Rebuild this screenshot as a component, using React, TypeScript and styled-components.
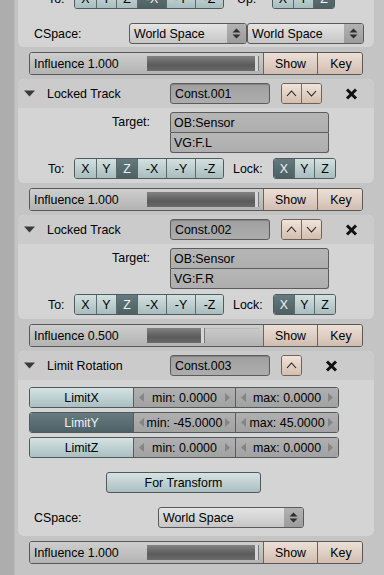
import React from 'react';
import styled, { createGlobalStyle } from 'styled-components';

const FONT = `"Liberation Sans", Arial, sans-serif`;

const Global = createGlobalStyle`
  html, body { margin: 0; padding: 0; background: #c4c4c4; }
  body { font-family: ${FONT}; font-size: 12.4px; color: #000; }
`;

const Viewport = styled.div`
  width: 384px;
  height: 575px;
  overflow: hidden;
  display: flex;
  background: #c4c4c4;
`;

const Gutter = styled.div`
  flex: 0 0 15px;
  background: #adadad;
  box-shadow: inset -1px 0 0 #b8b8b8;
`;

const Stack = styled.div`
  flex: 1;
  display: flex;
  flex-direction: column;
  margin-top: -16px;
  padding-left: 3px;
`;

const Panel = styled.section`
  width: 356px;
  flex: 0 0 auto;
  background: #d4d4d4;
  border-radius: 6px;
  overflow: hidden;
  box-shadow: inset 0 1px 0 #dedede;
`;

const PanelHeader = styled.header`
  height: 29px;
  display: flex;
  align-items: center;
  padding-left: 6px;
  background: #cbcbcb;
`;

const Collapse = styled.svg`
  flex: 0 0 11px;
  margin-right: 12px;
`;

const Title = styled.span`
  flex: 0 0 123px;
  white-space: nowrap;
`;

const NameField = styled.div`
  flex: 0 0 100px;
  box-sizing: border-box;
  height: 21px;
  border: 1px solid #5c5c5c;
  border-radius: 3px;
  background: linear-gradient(#a0a0a0, #adadad);
  box-shadow: inset 0 1px 1px rgba(0, 0, 0, 0.18);
  padding-left: 4px;
  display: flex;
  align-items: center;
  white-space: nowrap;
`;

const MoveGroup = styled.div`
  display: flex;
  margin-left: 11px;
  box-sizing: border-box;
  height: 21px;
  border: 1px solid #6e625a;
  border-radius: 3px;
  overflow: hidden;
`;

const MoveBtn = styled.div`
  width: 19px;
  display: flex;
  align-items: center;
  justify-content: center;
  background: linear-gradient(#f0e3d9, #d3beaf);
  & + & {
    border-left: 1px solid #7a6c62;
  }
`;

const CloseIcon = styled.svg`
  margin-left: 23px;
`;

const PanelBody = styled.div<{ $pt: number; $pb: number; $gap: number }>`
  display: flex;
  flex-direction: column;
  padding: ${(p) => p.$pt}px 0 ${(p) => p.$pb}px;
  gap: ${(p) => p.$gap}px;
`;

const TargetRow = styled.div`
  display: grid;
  grid-template-columns: 132px 159px;
  column-gap: 20px;
`;

const FieldLabel = styled.span`
  text-align: right;
  line-height: 21px;
`;

const TargetFields = styled.div`
  display: flex;
  flex-direction: column;
`;

const TargetField = styled.div<{ $first?: boolean }>`
  box-sizing: border-box;
  height: ${(p) => (p.$first ? 21 : 20)}px;
  border: 1px solid #5c5c5c;
  border-top-width: ${(p) => (p.$first ? 1 : 0)}px;
  border-radius: ${(p) => (p.$first ? '3px 3px 0 0' : '0 0 3px 3px')};
  background: linear-gradient(#b6b6b6, #aeaeae);
  padding-left: 3px;
  display: flex;
  align-items: center;
`;

const AxisRow = styled.div`
  display: flex;
  align-items: center;
  height: 21px;
  padding-left: 30px;
`;

const AxisLabel = styled.span<{ $w: number; $ml?: number }>`
  flex: 0 0 ${(p) => p.$w}px;
  margin-left: ${(p) => p.$ml ?? 0}px;
`;

const ToggleGroup = styled.div`
  display: flex;
  box-sizing: border-box;
  height: 21px;
  border: 1px solid #4f5c5c;
  border-radius: 3px;
  overflow: hidden;
`;

const Toggle = styled.div<{ $w: number; $on?: boolean }>`
  width: ${(p) => p.$w}px;
  display: flex;
  align-items: center;
  justify-content: center;
  white-space: nowrap;
  color: ${(p) => (p.$on ? '#eef2f2' : '#000')};
  background: ${(p) =>
    p.$on ? 'linear-gradient(#657a7e, #4d6064)' : 'linear-gradient(#d3e0e0, #a9bdbe)'};
  & + & {
    border-left: 1px solid #5c6a6a;
  }
`;

const CSpaceRow = styled.div`
  display: flex;
  align-items: center;
  height: 21px;
  padding-left: 16px;
`;

const Dropdown = styled.div<{ $w: number }>`
  flex: 0 0 ${(p) => p.$w}px;
  box-sizing: border-box;
  height: 21px;
  display: flex;
  border: 1px solid #5a5a5a;
  border-radius: 3px;
  overflow: hidden;
  background: linear-gradient(#e4e4e4, #c6c6c6);
`;

const DropText = styled.span`
  flex: 1;
  padding-left: 4px;
  display: flex;
  align-items: center;
  white-space: nowrap;
`;

const DropArrows = styled.span`
  flex: 0 0 19px;
  display: flex;
  align-items: center;
  justify-content: center;
  background: linear-gradient(#b2b2b2, #9c9c9c);
`;

const LimitList = styled.div`
  display: flex;
  flex-direction: column;
  gap: 4px;
`;

const LimitRow = styled.div`
  display: flex;
  margin-left: 11px;
  width: 310px;
  box-sizing: border-box;
  height: 21px;
  border: 1px solid #505a5a;
  border-radius: 3px;
  overflow: hidden;
`;

const LimitToggle = styled.div<{ $on?: boolean }>`
  flex: 0 0 103px;
  display: flex;
  align-items: center;
  justify-content: center;
  color: ${(p) => (p.$on ? '#eef2f2' : '#000')};
  background: ${(p) =>
    p.$on ? 'linear-gradient(#667b80, #4e6166)' : 'linear-gradient(#d5e2e3, #aabfc1)'};
`;

const NumField = styled.div<{ $w: number }>`
  flex: 0 0 ${(p) => p.$w}px;
  box-sizing: border-box;
  display: flex;
  align-items: center;
  justify-content: space-between;
  padding: 0 5px;
  border-left: 1px solid #5c5c5c;
  background: linear-gradient(#b0b0b0, #a2a2a2);
  white-space: nowrap;
`;

const ActionButton = styled.div`
  margin-left: 88px;
  width: 155px;
  box-sizing: border-box;
  height: 21px;
  display: flex;
  align-items: center;
  justify-content: center;
  border: 1px solid #505a5a;
  border-radius: 3px;
  background: linear-gradient(#d5e2e3, #aabfc1);
`;

const InfluenceRow = styled.div`
  display: flex;
  flex: 0 0 23px;
  width: 334px;
  box-sizing: border-box;
  margin: 5px 0 4px 11px;
  border: 1px solid #585858;
  border-radius: 3px;
  overflow: hidden;
`;

const Slider = styled.div`
  flex: 0 0 233px;
  display: flex;
  align-items: center;
  padding-left: 4px;
  box-sizing: border-box;
  background: linear-gradient(#cecece, #b3b3b3);
`;

const SliderLabel = styled.span`
  flex: 0 0 113px;
  white-space: nowrap;
`;

const Track = styled.div`
  flex: 0 0 112px;
  height: 15px;
  display: flex;
  box-shadow: inset 0 1px 0 rgba(0, 0, 0, 0.08);
`;

const Fill = styled.div`
  height: 100%;
  box-sizing: border-box;
  background: linear-gradient(#828282, #5b5b5b 60%, #6a6a6a);
  border-right: 3px solid #d6d6d6;
  box-shadow: 1px 0 0 #777;
`;

const PeachButton = styled.div<{ $w: number }>`
  flex: 0 0 ${(p) => p.$w}px;
  display: flex;
  align-items: center;
  justify-content: center;
  border-left: 1px solid #6e625a;
  background: linear-gradient(#ece0d7, #d1bdb0);
`;

/* ---------- icons ---------- */

const Triangle = () => (
  <Collapse width="11" height="7" viewBox="0 0 11 7">
    <polygon points="0,0.5 11,0.5 5.5,6.5" fill="#3a3a3a" />
  </Collapse>
);

const Chevron = ({ down }: { down?: boolean }) => (
  <svg width="11" height="7" viewBox="0 0 11 7">
    <polyline
      points={down ? '1,1 5.5,6 10,1' : '1,6 5.5,1 10,6'}
      fill="none"
      stroke="#1b1b1b"
      strokeWidth="1.1"
    />
  </svg>
);

const Close = () => (
  <CloseIcon width="13" height="12" viewBox="0 0 13 12">
    <path d="M2 1.5 L11 10.5 M11 1.5 L2 10.5" stroke="#111" strokeWidth="3" />
  </CloseIcon>
);

const UpDown = () => (
  <svg width="9" height="11" viewBox="0 0 9 11">
    <polygon points="0.5,4.5 4.5,0.5 8.5,4.5" fill="#2e2e2e" />
    <polygon points="0.5,6.5 4.5,10.5 8.5,6.5" fill="#2e2e2e" />
  </svg>
);

const Arrow = ({ right }: { right?: boolean }) => (
  <svg width="5" height="9" viewBox="0 0 5 9">
    <polygon points={right ? '0,0 5,4.5 0,9' : '5,0 0,4.5 5,9'} fill="#858585" />
  </svg>
);

/* ---------- parts ---------- */

const AXES = [
  { t: 'X', w: 21 },
  { t: 'Y', w: 19 },
  { t: 'Z', w: 20 },
  { t: '-X', w: 28 },
  { t: '-Y', w: 28 },
  { t: '-Z', w: 27 },
];
const LOCKS = [
  { t: 'X', w: 20 },
  { t: 'Y', w: 19 },
  { t: 'Z', w: 20 },
];

const AxisToggles = ({ items, on }: { items: { t: string; w: number }[]; on: string }) => (
  <ToggleGroup>
    {items.map((a) => (
      <Toggle key={a.t} $w={a.w} $on={a.t === on}>
        {a.t}
      </Toggle>
    ))}
  </ToggleGroup>
);

const Influence = ({ value }: { value: number }) => (
  <InfluenceRow>
    <Slider>
      <SliderLabel>Influence {value.toFixed(3)}</SliderLabel>
      <Track>
        <Fill style={{ width: 3 + value * 108 }} />
      </Track>
    </Slider>
    <PeachButton $w={53}>Show</PeachButton>
    <PeachButton $w={46}>Key</PeachButton>
  </InfluenceRow>
);

const Header = ({ title, name, down = true }: { title: string; name: string; down?: boolean }) => (
  <PanelHeader>
    <Triangle />
    <Title>{title}</Title>
    <NameField>{name}</NameField>
    <MoveGroup>
      <MoveBtn>
        <Chevron />
      </MoveBtn>
      {down && (
        <MoveBtn>
          <Chevron down />
        </MoveBtn>
      )}
    </MoveGroup>
    <Close />
  </PanelHeader>
);

const LockedTrack = ({ name, vg }: { name: string; vg: string }) => (
  <Panel>
    <Header title="Locked Track" name={name} />
    <PanelBody $pt={4} $pb={4} $gap={5}>
      <TargetRow>
        <FieldLabel>Target:</FieldLabel>
        <TargetFields>
          <TargetField $first>OB:Sensor</TargetField>
          <TargetField>{vg}</TargetField>
        </TargetFields>
      </TargetRow>
      <AxisRow>
        <AxisLabel $w={26}>To:</AxisLabel>
        <AxisToggles items={AXES} on="Z" />
        <AxisLabel $w={40} $ml={9}>
          Lock:
        </AxisLabel>
        <AxisToggles items={LOCKS} on="X" />
      </AxisRow>
    </PanelBody>
  </Panel>
);

const LIMITS = [
  { n: 'LimitX', on: false, min: '0.0000', max: '0.0000' },
  { n: 'LimitY', on: true, min: '-45.0000', max: '45.0000' },
  { n: 'LimitZ', on: false, min: '0.0000', max: '0.0000' },
];

export default function App() {
  return (
    <Viewport>
      <Global />
      <Gutter />
      <Stack>
        <Panel>
          <PanelBody $pt={4} $pb={3} $gap={14}>
            <AxisRow>
              <AxisLabel $w={26}>To:</AxisLabel>
              <AxisToggles items={AXES} on="-X" />
              <AxisLabel $w={35} $ml={13}>
                Up:
              </AxisLabel>
              <AxisToggles items={LOCKS} on="Z" />
            </AxisRow>
            <CSpaceRow>
              <AxisLabel $w={95}>CSpace:</AxisLabel>
              <Dropdown $w={118}>
                <DropText>World Space</DropText>
                <DropArrows>
                  <UpDown />
                </DropArrows>
              </Dropdown>
              <Dropdown $w={117}>
                <DropText>World Space</DropText>
                <DropArrows>
                  <UpDown />
                </DropArrows>
              </Dropdown>
            </CSpaceRow>
          </PanelBody>
        </Panel>
        <Influence value={1} />
        <LockedTrack name="Const.001" vg="VG:F.L" />
        <Influence value={1} />
        <LockedTrack name="Const.002" vg="VG:F.R" />
        <Influence value={0.5} />
        <Panel>
          <Header title="Limit Rotation" name="Const.003" down={false} />
          <PanelBody $pt={7} $pb={8} $gap={14}>
            <LimitList>
              {LIMITS.map((l) => (
                <LimitRow key={l.n}>
                  <LimitToggle $on={l.on}>{l.n}</LimitToggle>
                  <NumField $w={102}>
                    <Arrow />
                    <span>min: {l.min}</span>
                    <Arrow right />
                  </NumField>
                  <NumField $w={103}>
                    <Arrow />
                    <span>max: {l.max}</span>
                    <Arrow right />
                  </NumField>
                </LimitRow>
              ))}
            </LimitList>
            <ActionButton>For Transform</ActionButton>
            <CSpaceRow>
              <AxisLabel $w={124}>CSpace:</AxisLabel>
              <Dropdown $w={146}>
                <DropText>World Space</DropText>
                <DropArrows>
                  <UpDown />
                </DropArrows>
              </Dropdown>
            </CSpaceRow>
          </PanelBody>
        </Panel>
        <Influence value={1} />
      </Stack>
    </Viewport>
  );
}
